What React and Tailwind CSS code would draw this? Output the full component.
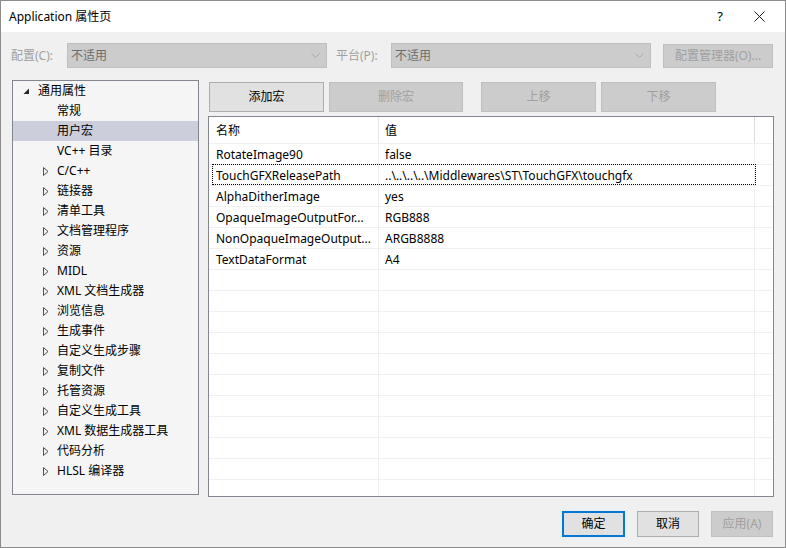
import React from 'react';

const font = { fontFamily: '"Noto Sans", "Noto Sans CJK SC", sans-serif' };

const treeItems = [
  { label: '通用属性', level: 0, arrow: 'open' },
  { label: '常规', level: 1 },
  { label: '用户宏', level: 1, selected: true },
  { label: 'VC++ 目录', level: 1 },
  { label: 'C/C++', level: 1, arrow: 'closed' },
  { label: '链接器', level: 1, arrow: 'closed' },
  { label: '清单工具', level: 1, arrow: 'closed' },
  { label: '文档管理程序', level: 1, arrow: 'closed' },
  { label: '资源', level: 1, arrow: 'closed' },
  { label: 'MIDL', level: 1, arrow: 'closed' },
  { label: 'XML 文档生成器', level: 1, arrow: 'closed' },
  { label: '浏览信息', level: 1, arrow: 'closed' },
  { label: '生成事件', level: 1, arrow: 'closed' },
  { label: '自定义生成步骤', level: 1, arrow: 'closed' },
  { label: '复制文件', level: 1, arrow: 'closed' },
  { label: '托管资源', level: 1, arrow: 'closed' },
  { label: '自定义生成工具', level: 1, arrow: 'closed' },
  { label: 'XML 数据生成器工具', level: 1, arrow: 'closed' },
  { label: '代码分析', level: 1, arrow: 'closed' },
  { label: 'HLSL 编译器', level: 1, arrow: 'closed' },
];

const macros = [
  ['RotateImage90', 'false'],
  ['TouchGFXReleasePath', '..\\..\\..\\..\\Middlewares\\ST\\TouchGFX\\touchgfx', true],
  ['AlphaDitherImage', 'yes'],
  ['OpaqueImageOutputFor...', 'RGB888'],
  ['NonOpaqueImageOutput...', 'ARGB8888'],
  ['TextDataFormat', 'A4'],
];

function Arrow({ kind }) {
  if (kind === 'open') {
    return (
      <svg width="7" height="7" viewBox="0 0 7 7">
        <path d="M6 0.5 L6 6 L0.5 6 Z" fill="#262626" />
      </svg>
    );
  }
  return (
    <svg width="6" height="9" viewBox="0 0 6 9">
      <path d="M0.5 0.5 L5 4.5 L0.5 8.5 Z" fill="none" stroke="#505050" strokeWidth="1" />
    </svg>
  );
}

function Combo({ value }) {
  return (
    <div className="w-[260px] h-[25px] flex items-center justify-between bg-[#cccccc] border border-[#bfbfbf] pl-[3px] pr-[6px] text-[#6d6d6d]">
      <span>{value}</span>
      <svg width="9" height="6" viewBox="0 0 9 6">
        <path d="M0.5 0.5 L4.5 4.5 L8.5 0.5" fill="none" stroke="#a8a8a8" strokeWidth="1" />
      </svg>
    </div>
  );
}

function Btn({ children, disabled, className = '' }) {
  return (
    <div
      className={
        'flex items-center justify-center border ' +
        (disabled ? 'bg-[#cccccc] border-[#bfbfbf] text-[#a0a0a0] ' : 'bg-[#e1e1e1] border-[#adadad] text-black ') +
        className
      }
    >
      {children}
    </div>
  );
}

export default function App() {
  const emptyRows = Array.from({ length: 12 });
  return (
    <div style={font} className="w-[786px] h-[548px] flex flex-col border border-[#8c8c8c] bg-[#f0f0f0] text-[12px] text-black overflow-hidden">
      {/* title bar */}
      <div className="h-[31px] shrink-0 bg-white flex items-center pl-[8px]">
        <span className="flex-1">Application 属性页</span>
        <span className="w-[20px] text-center text-[13px] mr-[24px]">?</span>
        <svg width="11" height="11" viewBox="0 0 11 11" className="mr-[20px]">
          <path d="M0.5 0.5 L10.5 10.5 M10.5 0.5 L0.5 10.5" stroke="#1a1a1a" strokeWidth="1" />
        </svg>
      </div>

      {/* config row */}
      <div className="flex items-center mt-[11px] pl-[10px] h-[25px]">
        <span className="w-[56px] text-[#a0a0a0]">配置(C):</span>
        <Combo value="不适用" />
        <span className="w-[55px] ml-[9px] text-[#a0a0a0]">平台(P):</span>
        <Combo value="不适用" />
        <Btn disabled className="ml-[12px] w-[110px] h-[24px]">配置管理器(O)...</Btn>
      </div>

      {/* main */}
      <div className="flex mt-[12px] pl-[11px]">
        <div className="w-[187px] h-[415px] border border-[#828790] bg-[#f5f5f5] overflow-hidden">
          {treeItems.map((it) => (
            <div
              key={it.label}
              className={'h-[20px] flex items-center ' + (it.selected ? 'bg-[#cccedb]' : '')}
            >
              <div
                className={
                  'flex items-center shrink-0 ' +
                  (it.level === 0 ? 'pl-[10px] w-[25px]' : 'pl-[30px] w-[44px]')
                }
              >
                {it.arrow && <Arrow kind={it.arrow} />}
              </div>
              <span>{it.label}</span>
            </div>
          ))}
        </div>

        <div className="ml-[9px] w-[566px] flex flex-col">
          <div className="flex items-center mt-[2px] pl-[1px] h-[30px]">
            <Btn className="w-[115px] h-[30px]">添加宏</Btn>
            <Btn disabled className="ml-[5px] w-[134px] h-[30px]">删除宏</Btn>
            <Btn disabled className="ml-[18px] w-[115px] h-[30px]">上移</Btn>
            <Btn disabled className="ml-[5px] w-[115px] h-[30px]">下移</Btn>
          </div>

          <div className="mt-[4px] h-[381px] border border-[#828790] bg-white overflow-hidden">
            <div className="flex h-[27px] border-b border-[#f0f0f0]">
              <div className="w-[170px] pl-[7px] pt-[2px] flex items-center border-r border-[#e5e5e5]">名称</div>
              <div className="w-[376px] pl-[6px] pt-[2px] flex items-center border-r border-[#dcdcdc]">值</div>
              <div className="flex-1" />
            </div>
            {macros.map(([k, v, focused]) => (
              <div key={k} className="relative flex h-[21px] border-b border-[#f0f0f0]">
                <div className="w-[170px] pl-[7px] pt-px flex items-center border-r border-[#f0f0f0]">{k}</div>
                <div className="w-[376px] pl-[6px] pt-px flex items-center border-r border-[#f0f0f0]">{v}</div>
                <div className="flex-1" />
                {focused && (
                  <div className="absolute left-[3px] w-[544px] -top-px bottom-0 border border-dotted border-black" />
                )}
              </div>
            ))}
            {emptyRows.map((_, i) => (
              <div key={i} className="flex h-[21px] border-b border-[#f0f0f0]">
                <div className="w-[170px] border-r border-[#f0f0f0]" />
                <div className="w-[376px] border-r border-[#f0f0f0]" />
                <div className="flex-1" />
              </div>
            ))}
          </div>
        </div>
      </div>

      {/* bottom buttons */}
      <div className="flex justify-end items-center mt-[14px] pr-[12px] gap-[12px]">
        <div className="w-[63px] h-[26px] flex items-center justify-center bg-[#e1e1e1] border-2 border-[#0078d7]">确定</div>
        <Btn className="w-[62px] h-[26px]">取消</Btn>
        <Btn disabled className="w-[62px] h-[26px]">应用(A)</Btn>
      </div>
    </div>
  );
}
